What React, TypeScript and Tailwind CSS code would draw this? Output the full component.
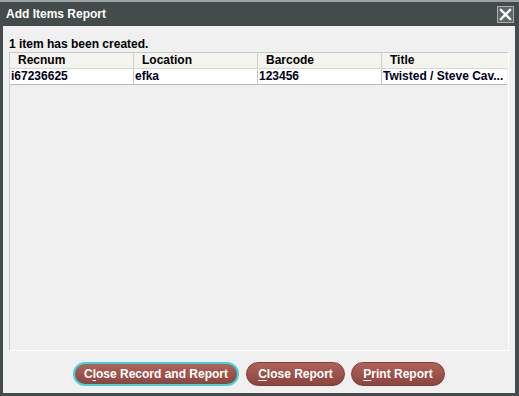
import React from "react";

const font = { fontFamily: '"Liberation Sans", Arial, sans-serif' };

function Btn({ pre, u, rest, focus, w }: { pre: string; u: string; rest: string; focus?: boolean; w: string }) {
  return (
    <button
      className={
        w +
        " h-[24px] rounded-full text-[12px] font-bold text-white bg-gradient-to-b from-[#b0625a] to-[#8c453e] flex items-center justify-center " +
        (focus ? "border-2 border-[#3ad6de]" : "border border-[#7e3f39]")
      }
      style={font}
    >
      {pre}
      <span className="underline underline-offset-2">{u}</span>
      {rest}
    </button>
  );
}

export default function App() {
  const cols = [
    { h: "Recnum", v: "i67236625", w: "w-[124px]" },
    { h: "Location", v: "efka", w: "w-[124px]" },
    { h: "Barcode", v: "123456", w: "w-[124px]" },
    { h: "Title", v: "Twisted / Steve Cav...", w: "flex-1" },
  ];
  return (
    <div className="w-[519px] h-[396px] bg-[#434b4b] border-t-2 border-t-[#9aa2a2] flex flex-col" style={font}>
      <div className="h-[24px] flex items-center justify-between pl-[6px] pr-[5px]">
        <span className="text-white font-bold text-[12px]">Add Items Report</span>
        <div className="w-[17px] h-[17px] border border-[#a9b0b0] bg-[#5e6666] flex items-center justify-center">
          <svg width="13" height="13" viewBox="0 0 13 13">
            <path d="M2 2 L11 11 M11 2 L2 11" stroke="white" strokeWidth="2.4" strokeLinecap="square" />
          </svg>
        </div>
      </div>
      <div className="flex-1 ml-[3px] mr-[4px] mb-[3px] bg-[#f0f0f0] flex flex-col px-[6px]">
        <div className="pt-[11px] text-[12px] font-bold text-black leading-[14px]">1 item has been created.</div>
        <div className="mt-[1px] h-[299px] w-[500px] border border-[#c8c8c8] border-r-white border-b-white flex flex-col">
          <div className="flex bg-[#f4f4ee] h-[16px] border-b border-[#d8d8d0]">
            {cols.map((c, i) => (
              <div
                key={c.h}
                className={c.w + " text-[12px] font-bold leading-[15px] pl-[8px] " + (i < 3 ? "border-r border-[#d0d0c8]" : "")}
              >
                {c.h}
              </div>
            ))}
          </div>
          <div className="flex bg-white h-[16px] border-b border-[#b8b8b8] mr-[1px]">
            {cols.map((c, i) => (
              <div
                key={c.h}
                className={c.w + " text-[12px] font-bold leading-[15px] pl-[1px] whitespace-nowrap overflow-hidden text-[#000020] " + (i < 3 ? "border-r border-[#c8c8c8]" : "")}
              >
                {c.v}
              </div>
            ))}
          </div>
        </div>
        <div className="flex mt-[11px] pl-[64px]">
          <Btn pre="C" u="l" rest="ose Record and Report" focus w="w-[166px]" />
          <div className="w-[7px]" />
          <Btn pre="" u="C" rest="lose Report" w="w-[99px]" />
          <div className="w-[6px]" />
          <Btn pre="" u="P" rest="rint Report" w="w-[94px]" />
        </div>
      </div>
    </div>
  );
}
